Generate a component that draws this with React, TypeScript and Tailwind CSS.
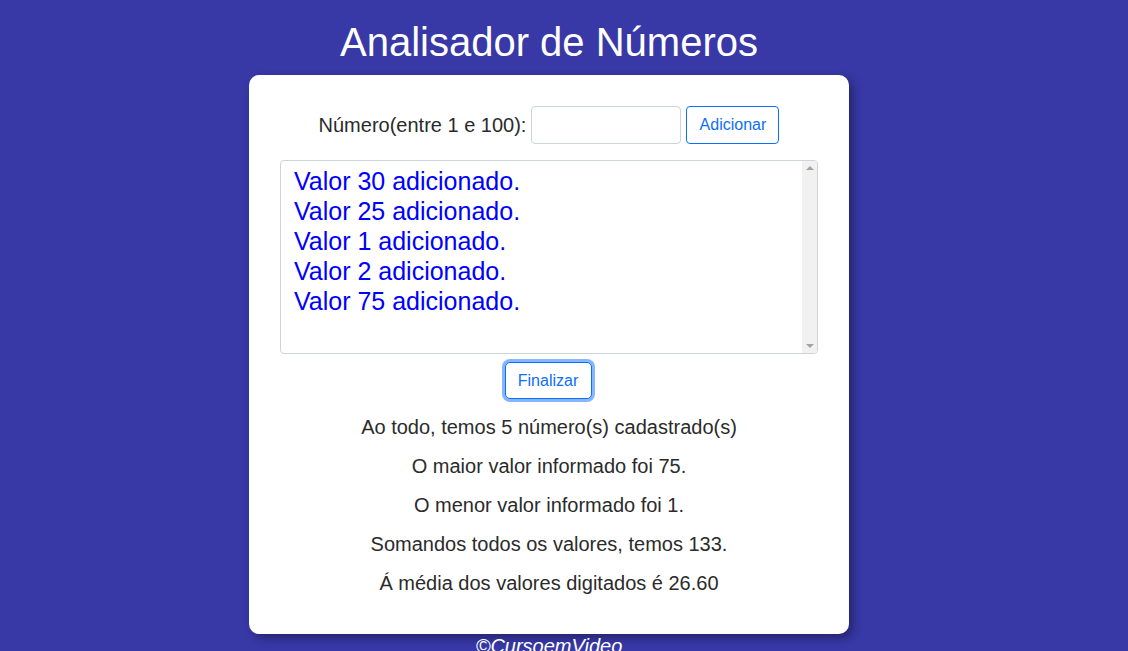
import React from "react";

export default function App() {
  const lines = [
    "Valor 30 adicionado.",
    "Valor 25 adicionado.",
    "Valor 1 adicionado.",
    "Valor 2 adicionado.",
    "Valor 75 adicionado.",
  ];
  const results = [
    "Ao todo, temos 5 número(s) cadastrado(s)",
    "O maior valor informado foi 75.",
    "O menor valor informado foi 1.",
    "Somandos todos os valores, temos 133.",
    "Á média dos valores digitados é 26.60",
  ];
  return (
    <div
      className="min-h-[651px] bg-[#3838a7] flex flex-col items-center overflow-hidden pr-[30px]"
      style={{ fontFamily: '"Liberation Sans", Arial, sans-serif' }}
    >
      <h1 className="text-white text-[40px] leading-[48px] mt-[18px] mb-[9px]">
        Analisador de Números
      </h1>
      <div className="w-[600px] bg-white rounded-[10px] shadow-[4px_4px_10px_rgba(0,0,0,0.35)] pt-[31px] pb-[31px] px-[31px] flex flex-col items-center">
        <div className="flex items-center gap-[5px] h-[38px]">
          <span className="text-[20px] text-[#2b2b2b]">Número(entre 1 e 100):</span>
          <div className="w-[150px] h-[38px] border border-[#ced4da] rounded-[4px] bg-white" />
          <button className="h-[38px] w-[93px] border border-[#0d6efd] rounded-[4px] text-[#0d6efd] text-[16px] bg-white">
            Adicionar
          </button>
        </div>
        <div className="mt-[16px] w-[538px] h-[194px] border border-[#ced4da] rounded-[4px] bg-white flex overflow-hidden">
          <div className="flex-1 pl-[13px] pt-[5px]">
            {lines.map((l) => (
              <div key={l} className="text-[25px] leading-[30px] text-[#0000ff]">
                {l}
              </div>
            ))}
          </div>
          <div className="w-[15px] bg-[#f1f1f1] flex flex-col items-center justify-between py-[5px]">
            <div className="w-0 h-0 border-l-[4px] border-r-[4px] border-b-[4px] border-l-transparent border-r-transparent border-b-[#a3a3a3]" />
            <div className="w-0 h-0 border-l-[4px] border-r-[4px] border-t-[4px] border-l-transparent border-r-transparent border-t-[#a3a3a3]" />
          </div>
        </div>
        <button className="mt-[8px] h-[37px] w-[87px] -translate-x-[1px] border border-[#0d6efd] rounded-[5px] text-[#0d6efd] text-[16px] bg-white shadow-[0_0_0_3px_rgba(13,110,253,0.5)]">
          Finalizar
        </button>
        <div className="mt-[9px] flex flex-col items-center">
          {results.map((r) => (
            <p key={r} className="text-[20px] leading-[39px] text-[#2b2b2b]">
              {r}
            </p>
          ))}
        </div>
      </div>
      <div className="text-white italic text-[20px] leading-[22px] mt-[1px]">©CursoemVideo</div>
    </div>
  );
}
